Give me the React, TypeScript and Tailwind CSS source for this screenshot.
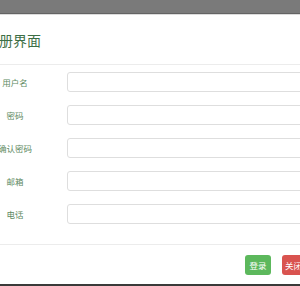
const fields = ['用户名', '密码', '确认密码', '邮箱', '电话'];

export default function App() {
  return (
    <div
      className="w-[300px] h-[286px] overflow-hidden bg-white flex flex-col"
      style={{ fontFamily: '"Noto Sans CJK SC", "Liberation Sans", sans-serif' }}
    >
      {/* backdrop strip */}
      <div className="h-[13px] shrink-0 bg-[#7a7a7a]" />
      <div className="h-px shrink-0 bg-[#636363]" />
      <div className="h-px shrink-0 bg-[#dcdcdc]" />

      {/* header */}
      <div className="h-[50px] shrink-0 flex items-center border-b border-[#ececec]">
        <h4 className="ml-[-15px] text-[14px] leading-none text-[#3c6e45] whitespace-nowrap">注册界面</h4>
      </div>

      {/* body */}
      <div className="flex flex-col gap-[13px] pt-[7px] pb-[20px] border-b border-[#ececec]">
        {fields.map((label) => (
          <div key={label} className="flex items-center h-[20px]">
            <div className="w-[30px] shrink-0 flex justify-center">
              <span className="whitespace-nowrap text-[8.5px] text-[#5e8a62]">{label}</span>
            </div>
            <input
              type="text"
              className="ml-[37px] w-[260px] h-[20px] shrink-0 rounded-[3px] border border-[#dedede] bg-white"
            />
          </div>
        ))}
      </div>

      {/* footer */}
      <div className="flex gap-[11px] pl-[245px] pt-[10px]">
        <button className="w-[26px] h-[20px] shrink-0 rounded-[3px] bg-[#5cb85c] text-white text-[8.5px]">登录</button>
        <button className="w-[26px] h-[20px] shrink-0 rounded-[3px] bg-[#d9534f] text-white text-[8.5px] text-left pl-[3px] whitespace-nowrap overflow-hidden">关闭</button>
      </div>

      <div className="flex-1" />
      <div className="h-[2px] shrink-0 bg-[#3a3a3a]" />
    </div>
  );
}
